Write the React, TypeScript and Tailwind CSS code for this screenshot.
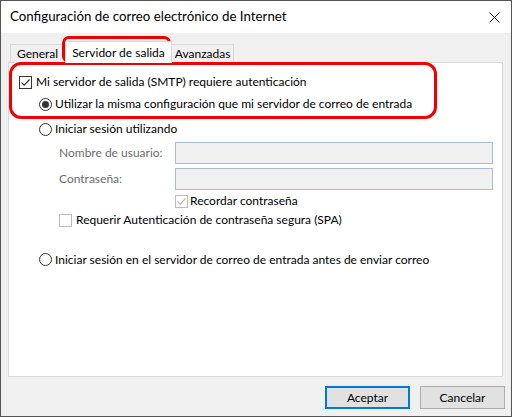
import React from "react";

const Check = ({ checked = false, disabled = false }: { checked?: boolean; disabled?: boolean }) => (
  <span
    className={`relative w-[13px] h-[13px] shrink-0 border bg-white ${
      disabled ? "border-[#bcbcbc]" : "border-[#333333]"
    }`}
  >
    {checked && (
      <svg className="absolute left-0 top-0" width="11" height="11" viewBox="0 0 11 11">
        <path d="M1.5 5.5 L4.2 8.2 L9.5 2.5" fill="none" stroke={disabled ? "#bcbcbc" : "#333333"} strokeWidth="1.2" />
      </svg>
    )}
  </span>
);

const Radio = ({ checked = false }: { checked?: boolean }) => (
  <span className="w-[13px] h-[13px] shrink-0 rounded-full border border-[#333333] bg-white flex items-center justify-center">
    {checked && <span className="w-[7px] h-[7px] rounded-full bg-[#333333]" />}
  </span>
);

export default function App() {
  return (
    <div className="relative w-[512px] h-[417px] border border-[#555555] bg-[#f0f0f0] flex flex-col text-[12px] text-black font-['Lato',sans-serif] leading-none">
      {/* barra de título */}
      <div className="h-[32px] shrink-0 bg-white flex items-center justify-between pl-[9px] pr-[11px]">
        <span className="text-[13.3px]">Configuración de correo electrónico de Internet</span>
        <svg width="11" height="11" viewBox="0 0 11 11">
          <path d="M0.5 0.5 L10.5 10.5 M10.5 0.5 L0.5 10.5" stroke="#111" strokeWidth="1" />
        </svg>
      </div>

      {/* pestañas */}
      <div className="flex items-end h-[29px] pl-[9px] shrink-0">
        <div className="h-[18px] px-[6px] flex items-center border border-b-0 border-[#d9d9d9] bg-[#f0f0f0]">General</div>
        <div className="relative z-10 h-[22px] -mb-px px-[6px] flex items-center border border-b-0 border-[#d9d9d9] bg-white">
          Servidor de salida
        </div>
        <div className="h-[18px] px-[3px] flex items-center border border-b-0 border-l-0 border-[#d9d9d9] bg-[#f0f0f0]">Avanzadas</div>
      </div>

      {/* panel */}
      <div className="ml-[7px] mr-[8px] h-[315px] shrink-0 border border-[#d9d9d9] bg-white pl-[10px] pt-[8px] flex flex-col">
        <div className="h-[22px] flex items-center gap-[4px]">
          <Check checked />
          <span>Mi servidor de salida (SMTP) requiere autenticación</span>
        </div>
        <div className="h-[22px] pl-[20px] flex items-center gap-[3px]">
          <Radio checked />
          <span>Utilizar la misma configuración que mi servidor de correo de entrada</span>
        </div>
        <div className="h-[22px] mt-[3px] pl-[20px] flex items-center gap-[3px]">
          <Radio />
          <span>Iniciar sesión utilizando</span>
        </div>
        <div className="h-[22px] mt-[2px] pl-[40px] flex items-center">
          <span className="w-[116px] text-[#6d6d6d]">Nombre de usuario:</span>
          <div className="w-[318px] h-[22px] border border-[#a9bcd5] bg-[#f0f0f0]" />
        </div>
        <div className="h-[22px] mt-[4px] pl-[40px] flex items-center">
          <span className="w-[116px] text-[#6d6d6d]">Contraseña:</span>
          <div className="w-[318px] h-[22px] border border-[#a9bcd5] bg-[#f0f0f0]" />
        </div>
        <div className="h-[18px] mt-[2px] pl-[156px] flex items-center gap-[2px]">
          <Check checked disabled />
          <span>Recordar contraseña</span>
        </div>
        <div className="h-[18px] mt-[1px] pl-[40px] flex items-center gap-[4px]">
          <Check disabled />
          <span>Requerir Autenticación de contraseña segura (SPA)</span>
        </div>
        <div className="h-[19px] mt-[21px] pl-[20px] flex items-center gap-[3px]">
          <Radio />
          <span>Iniciar sesión en el servidor de correo de entrada antes de enviar correo</span>
        </div>
      </div>

      {/* botones */}
      <div className="flex justify-end gap-[10px] pr-[6px] pt-[9px]">
        <button className="w-[85px] h-[23px] bg-[#e1e1e1] border-2 border-[#0078d7]">Aceptar</button>
        <button className="w-[85px] h-[23px] bg-[#e1e1e1] border border-[#adadad]">Cancelar</button>
      </div>

      {/* marcas rojas */}
      <div className="absolute left-[61px] top-[35px] w-[109px] h-[27px] border-[3px] border-[#f00000] rounded-[7px] pointer-events-none" />
      <div className="absolute left-[8px] top-[61px] w-[428px] h-[57px] border-[3px] border-[#f00000] rounded-[12px] pointer-events-none" />
    </div>
  );
}
